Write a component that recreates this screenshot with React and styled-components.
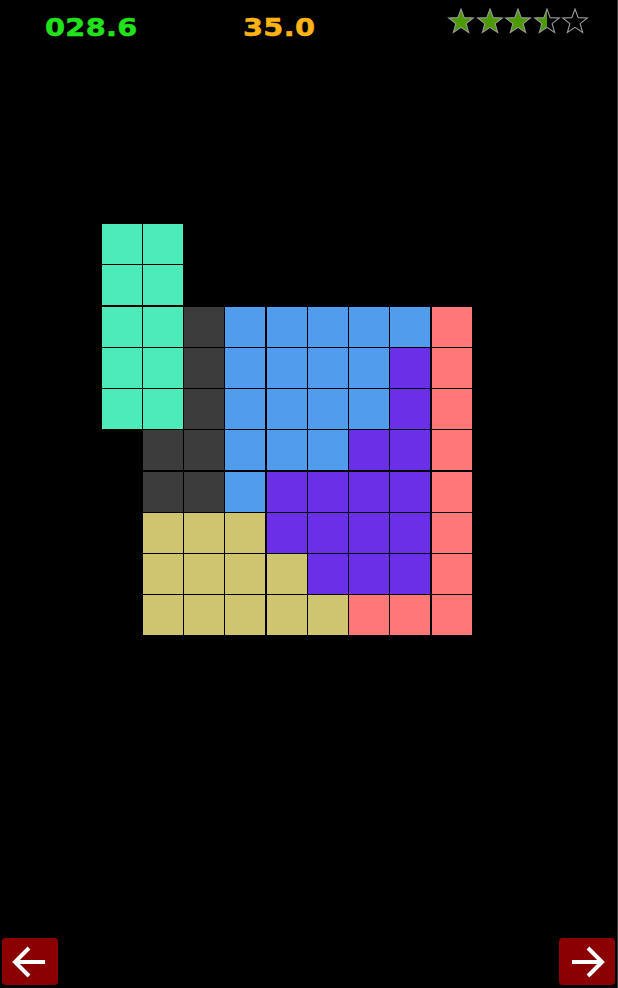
import React from "react";
import styled, { createGlobalStyle } from "styled-components";

const Global = createGlobalStyle`
  html, body { margin: 0; padding: 0; background: #000; }
  body { font-family: "DejaVu Sans", sans-serif; }
  #root { min-height: 100vh; }
`;

const Page = styled.div`
  box-sizing: border-box;
  min-height: 100vh;
  display: flex;
  flex-direction: column;
  background: #000;
  border-right: 1px solid #3a3a3a;
`;

const Header = styled.header`
  display: grid;
  grid-template-columns: 198px 204px 1fr;
  align-items: center;
  padding: 10px 0 0 45px;
  height: 34px;
`;

const Score = styled.div`
  font-family: "DejaVu Sans", sans-serif;
  font-weight: bold;
  font-size: 25px;
  letter-spacing: 0.3px;
  line-height: 1;
  color: ${(p) => p.$color};
  -webkit-text-stroke: 0.5px ${(p) => p.$color};
  transform: scaleX(1.15);
  transform-origin: left center;
  white-space: nowrap;
`;

const Stars = styled.div`
  display: flex;
  gap: 0.5px;
  margin-top: -10px;
`;

const Board = styled.div`
  display: grid;
  grid-template-columns: repeat(9, 40px);
  grid-template-rows: repeat(10, 40px);
  gap: 1.25px;
  margin: 180px 0 0 101.5px;
`;

const Cell = styled.div`
  background: ${(p) => p.$color || "transparent"};
`;

const Footer = styled.footer`
  margin-top: auto;
  display: flex;
  justify-content: space-between;
  padding: 0 2px 3px 2px;
`;

const NavButton = styled.button`
  width: 56px;
  height: 47px;
  border: none;
  border-radius: 4px;
  background: #8b0000;
  display: flex;
  align-items: center;
  justify-content: center;
  padding: 0;
  cursor: pointer;
`;

const C = {
  t: "#4eebba",
  d: "#3c3c3c",
  b: "#529cee",
  p: "#6b2fe7",
  r: "#ff7878",
  y: "#cfc570",
  ".": null,
};

const layout = [
  "tt.......",
  "tt.......",
  "ttdbbbbbr",
  "ttdbbbbpr",
  "ttdbbbbpr",
  ".ddbbbppr",
  ".ddbppppr",
  ".yyyppppr",
  ".yyyypppr",
  ".yyyyyrrr",
];

const starPoints = (() => {
  const cx = 14, cy = 14, R = 13, r = 5.4;
  const pts = [];
  for (let i = 0; i < 10; i++) {
    const a = -Math.PI / 2 + (i * Math.PI) / 5;
    const rad = i % 2 === 0 ? R : r;
    pts.push(`${(cx + rad * Math.cos(a)).toFixed(2)},${(cy + rad * Math.sin(a)).toFixed(2)}`);
  }
  return pts.join(" ");
})();

function Star({ fill, id }) {
  return (
    <svg width="28" height="28" viewBox="0 0 28 28">
      <defs>
        <clipPath id={id}>
          <rect x="0" y="0" width={28 * fill} height="28" />
        </clipPath>
      </defs>
      {fill > 0 && (
        <polygon points={starPoints} fill="#4c9a00" clipPath={`url(#${id})`} />
      )}
      <polygon points={starPoints} fill="none" stroke="#9a9a9a" strokeWidth="1.1" />
    </svg>
  );
}

function Arrow({ dir }) {
  const flip = dir === "right" ? "scale(-1,1) translate(-36,0)" : undefined;
  return (
    <svg width="36" height="36" viewBox="0 0 36 36">
      <g transform={flip} stroke="#fff" strokeWidth="4" fill="none" strokeLinecap="butt">
        <line x1="3" y1="18" x2="33" y2="18" />
        <polyline points="17,4 3,18 17,32" strokeLinejoin="miter" />
      </g>
    </svg>
  );
}

export default function App() {
  const ratings = [1, 1, 1, 0.5, 0];
  return (
    <>
      <Global />
      <Page>
        <Header>
          <Score $color="#22e21b">028.6</Score>
          <Score $color="#fdb515">35.0</Score>
          <Stars>
            {ratings.map((f, i) => (
              <Star key={i} fill={f} id={`star-clip-${i}`} />
            ))}
          </Stars>
        </Header>
        <Board>
          {layout.flatMap((row, r) =>
            row.split("").map((ch, c) => <Cell key={`${r}-${c}`} $color={C[ch]} />)
          )}
        </Board>
        <Footer>
          <NavButton aria-label="Previous">
            <Arrow dir="left" />
          </NavButton>
          <NavButton aria-label="Next">
            <Arrow dir="right" />
          </NavButton>
        </Footer>
      </Page>
    </>
  );
}
